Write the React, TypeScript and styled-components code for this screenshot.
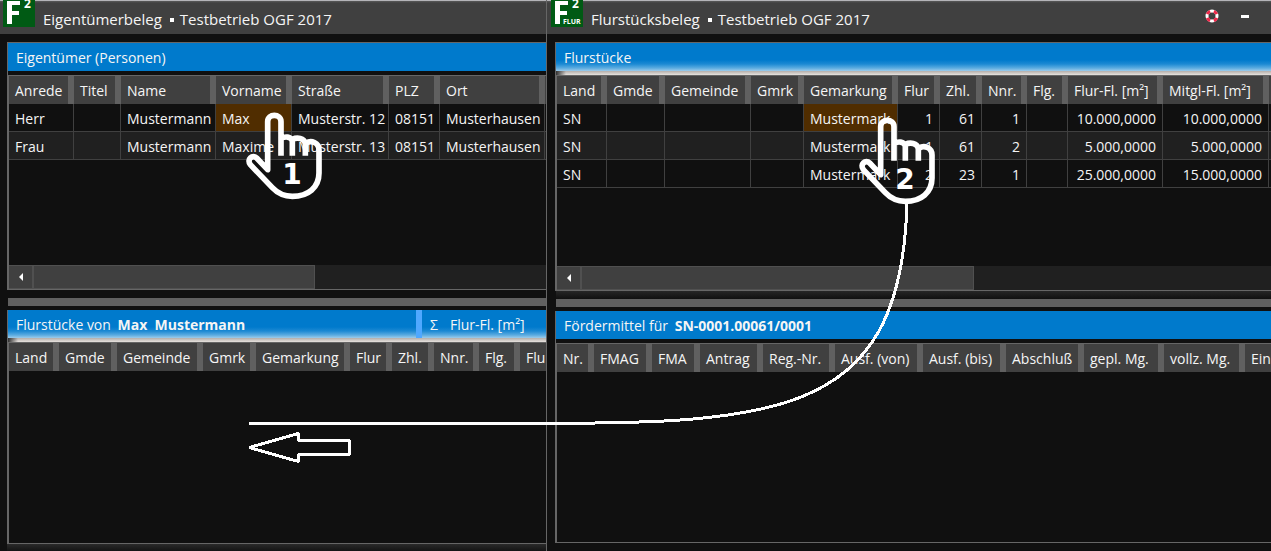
import React from "react";
import styled, { createGlobalStyle, css } from "styled-components";

const GlobalStyle = createGlobalStyle`
  * { box-sizing: border-box; }
  body {
    margin: 0;
    background: #101010;
    color: #f5f5f5;
    font-family: "Open Sans", "Noto Sans", sans-serif;
    font-size: 14px;
    line-height: 20px;
  }
`;

const Desktop = styled.main`
  position: relative;
  display: grid;
  grid-template-columns: minmax(0, 546fr) minmax(0, 725fr);
  min-height: 100vh;
  overflow: hidden;
`;

const Window = styled.section<{ $framed?: boolean }>`
  display: flex;
  flex-direction: column;
  min-width: 0;
  border-left: ${(p) => (p.$framed ? "1px solid #666" : "none")};
`;

const TitleBar = styled.header<{ $inset: number }>`
  display: flex;
  align-items: flex-start;
  height: 34px;
  padding-left: ${(p) => p.$inset}px;
  background: linear-gradient(#b4b4b8 1px, #5a5a5a 1px, #404040 3px);
`;

const Title = styled.h1`
  display: flex;
  gap: 6px;
  margin: 0 0 0 8px;
  font-size: 15px;
  font-weight: 400;
  line-height: 38px;
  white-space: nowrap;
`;

const Bullet = styled.span`
  width: 4px;
  height: 4px;
  margin: 18px 0 0 2px;
  background: #fff;
`;

const TitleActions = styled.div`
  display: flex;
  gap: 13px;
  margin: 6px 16px 0 auto;
`;

const TitleButton = styled.button`
  display: grid;
  place-items: center;
  width: 20px;
  height: 20px;
  padding: 0;
  border: 0;
  background: none;
`;

const Body = styled.div<{ $inset: number; $foot: number }>`
  display: flex;
  flex: 1;
  flex-direction: column;
  padding: 8px 0 0 ${(p) => p.$inset}px;
  &::after {
    content: "";
    height: ${(p) => p.$foot}px;
    background: ${(p) => (p.$foot === 7 ? "linear-gradient(#2a2a2a, #141414)" : "none")};
  }
`;

const Panel = styled.section<{ $grow?: boolean }>`
  display: flex;
  flex: ${(p) => (p.$grow ? 1 : "none")};
  flex-direction: column;
  border-left: 1px solid #666;
  border-top: ${(p) => (p.$grow ? "none" : "1px solid #666")};
`;

const PanelHead = styled.div<{ $glow?: boolean }>`
  display: flex;
  height: 32px;
  padding-bottom: 4px;
  line-height: 29px;
  white-space: nowrap;
  background: linear-gradient(#007acc 28px, #101010 28px);
  ${(p) =>
    p.$glow &&
    css`
      background:
        linear-gradient(90deg, #303030, transparent 10px) 0 28px / 100% 4px no-repeat,
        linear-gradient(#007acc 17px, #1c89d3 21px, #5aabe0 25px, #9dcbea 28px, #b4aeaa 28px, #e6e2de 32px);
    `}
`;

const PanelTitle = styled.h2`
  display: flex;
  flex: 1;
  margin: 0;
  padding-left: 8px;
  font-size: 14px;
  font-weight: 400;
  white-space: pre;
`;

const Subject = styled.b`
  margin-left: 3px;
`;

const Sum = styled.div`
  display: flex;
  gap: 12px;
  width: 130px;
  height: 28px;
  padding-left: 8px;
  border-left: 6px solid #4fa8ff;
`;

const Grid = styled.div<{ $height?: number }>`
  display: flex;
  flex: 1;
  flex-direction: column;
  min-height: ${(p) => p.$height ?? 0}px;
  overflow: hidden;
  border: 1px solid #666;
  border-right: 0;
`;

const Table = styled.table`
  table-layout: fixed;
  width: 0;
  border-collapse: separate;
  border-spacing: 0;
  white-space: nowrap;
`;

const Column = styled.col<{ $width: number }>`
  width: ${(p) => p.$width}px;
`;

const HeadCell = styled.th`
  height: 28px;
  padding: 2px 0 0 6px;
  border-right: 6px solid #606060;
  background: #404040;
  font-weight: 400;
  text-align: left;
`;

const Row = styled.tr`
  background: #101010;
  &:nth-child(even) {
    background: #202020;
  }
`;

const Cell = styled.td<{ $number?: boolean; $selected?: boolean }>`
  height: 28px;
  padding: ${(p) => (p.$number ? "2px 6px 0 0" : "2px 0 0 6px")};
  border-right: 1px solid #404040;
  border-bottom: 1px solid #404040;
  text-align: ${(p) => (p.$number ? "right" : "left")};
  background: ${(p) => (p.$selected ? "#502d00" : "transparent")};
`;

const ScrollBar = styled.div`
  display: flex;
  height: 24px;
  margin-top: auto;
  background: #202020;
`;

const ScrollButton = styled.button`
  display: grid;
  flex: none;
  place-items: center;
  width: 24px;
  padding: 0;
  border: 1px solid #505050;
  border-left: 0;
  background: #404040;
`;

const Track = styled.div`
  flex: 1;
`;

const Thumb = styled.div<{ $share: number }>`
  width: ${(p) => p.$share}%;
  height: 100%;
  border: 1px solid #505050;
  background: #404040;
`;

const Splitter = styled.div<{ $shaded?: boolean }>`
  height: 20px;
  margin-left: 1px;
  background: linear-gradient(
    ${(p) => (p.$shaded ? "#262626" : "#101010")} 0,
    #101010 8px,
    #606060 8px,
    #606060 16px,
    #101010 16px
  );
`;

const Annotations = styled.svg`
  position: absolute;
  top: 0;
  left: 0;
  pointer-events: none;
`;

const LogoSvg = styled.svg`
  flex: none;
`;

type ColumnDef = { label: string; width: number; number?: boolean };

const c = (label: string, width: number, number = false): ColumnDef => ({ label, width, number });

const ownerColumns = [
  c("Anrede", 65), c("Titel", 47), c("Name", 95), c("Vorname", 76),
  c("Straße", 97), c("PLZ", 51), c("Ort", 105), c("", 60),
];
const ownerRows = [
  ["Herr", "", "Mustermann", "Max", "Musterstr. 12", "08151", "Musterhausen", ""],
  ["Frau", "", "Mustermann", "Maxime", "Musterstr. 13", "08151", "Musterhausen", ""],
];
const parcelColumns = [
  c("Land", 50), c("Gmde", 58), c("Gemeinde", 86), c("Gmrk", 53), c("Gemarkung", 94),
  c("Flur", 42, true), c("Zhl.", 42, true), c("Nnr.", 45, true), c("Flg.", 41),
  c("Flur-Fl. [m²]", 95, true), c("Mitgl-Fl. [m²]", 106, true), c("", 60),
];
const parcelRows = [
  ["SN", "", "", "", "Mustermark", "1", "61", "1", "", "10.000,0000", "10.000,0000", ""],
  ["SN", "", "", "", "Mustermark", "1", "61", "2", "", "5.000,0000", "5.000,0000", ""],
  ["SN", "", "", "", "Mustermark", "2", "23", "1", "", "25.000,0000", "15.000,0000", ""],
];
const ownedColumns = [
  c("Land", 50), c("Gmde", 58), c("Gemeinde", 86), c("Gmrk", 53), c("Gemarkung", 94),
  c("Flur", 42), c("Zhl.", 42), c("Nnr.", 45), c("Flg.", 41), c("Flu", 95),
];
const fundingColumns = [
  c("Nr.", 37), c("FMAG", 58), c("FMA", 48), c("Antrag", 63), c("Reg.-Nr.", 72),
  c("Ausf. (von)", 88), c("Ausf. (bis)", 83), c("Abschluß", 78), c("gepl. Mg.", 80),
  c("vollz. Mg.", 81), c("Ein", 70),
];

function DataTable({ columns, rows = [], selected }: { columns: ColumnDef[]; rows?: string[][]; selected?: number }) {
  return (
    <Table>
      <colgroup>
        {columns.map((col, i) => <Column key={i} $width={col.width} />)}
      </colgroup>
      <thead>
        <tr>{columns.map((col, i) => <HeadCell key={i} scope="col">{col.label}</HeadCell>)}</tr>
      </thead>
      <tbody>
        {rows.map((row, r) => (
          <Row key={r}>
            {row.map((value, i) => (
              <Cell key={i} $number={columns[i].number} $selected={r === 0 && i === selected}>{value}</Cell>
            ))}
          </Row>
        ))}
      </tbody>
    </Table>
  );
}

function HorizontalScroll({ share }: { share: number }) {
  return (
    <ScrollBar>
      <ScrollButton aria-label="Nach links">
        <svg width="4" height="8" viewBox="0 0 4 8"><path d="M4 0v8L0 4z" fill="#fff" /></svg>
      </ScrollButton>
      <Track><Thumb $share={share} /></Track>
    </ScrollBar>
  );
}

function Logo({ caption }: { caption?: string }) {
  return (
    <LogoSvg width="32" height="27" viewBox="0 0 32 27" aria-hidden="true">
      <rect width="32" height="27" fill="#005a14" />
      <path d="M4 1h13v4H9v6h7v4H9v9H4z" fill="#fff" />
      <text x="21" y="8" fill="#fff" fontSize="12" fontWeight="700">2</text>
      {caption && <text x="12" y="24" fill="#fff" fontSize="7" fontWeight="700">{caption}</text>}
    </LogoSvg>
  );
}

function Hand({ x, y, label }: { x: number; y: number; label: string }) {
  return (
    <g transform={`translate(${x} ${y})`}>
      <path
        transform="scale(.3333)"
        d="M117 149V47C117 22 77 22 77 47V191L44 156C32 144 13 160 25 176L91 245C108 263 124 271 151 271C199 271 231 244 231 201V132C231 109 207 102 193 111M117 98C129 90 147 91 151 105V149M151 100C166 93 186 96 190 112V149"
        fill="none"
        stroke="#fff"
        strokeWidth="17"
        strokeLinejoin="round"
      />
      <text x="50" y="78" fill="#fff" textAnchor="middle" fontFamily="DejaVu Sans" fontSize="28" fontWeight="700">
        {label}
      </text>
    </g>
  );
}

export default function App() {
  return (
    <Desktop>
      <GlobalStyle />
      <Window>
        <TitleBar $inset={3}>
          <Logo />
          <Title>Eigentümerbeleg <Bullet />Testbetrieb OGF 2017</Title>
        </TitleBar>
        <Body $inset={7} $foot={7}>
          <Panel>
            <PanelHead><PanelTitle>Eigentümer (Personen)</PanelTitle></PanelHead>
            <Grid $height={215}>
              <DataTable columns={ownerColumns} rows={ownerRows} selected={3} />
              <HorizontalScroll share={55} />
            </Grid>
          </Panel>
          <Splitter />
          <Panel $grow>
            <PanelHead $glow>
              <PanelTitle>Flurstücke von <Subject>Max  Mustermann</Subject></PanelTitle>
              <Sum><span>Σ</span><span>Flur-Fl. [m²]</span></Sum>
            </PanelHead>
            <Grid><DataTable columns={ownedColumns} /></Grid>
          </Panel>
        </Body>
      </Window>
      <Window $framed>
        <TitleBar $inset={4}>
          <Logo caption="FLUR" />
          <Title>Flurstücksbeleg <Bullet />Testbetrieb OGF 2017</Title>
          <TitleActions>
            <TitleButton aria-label="Hilfe">
              <svg width="14" height="14" viewBox="0 0 14 14" fill="none" strokeWidth="3">
                <circle cx="7" cy="7" r="5" stroke="#fff" />
                <circle cx="7" cy="7" r="5" stroke="#f0284a" pathLength="80" strokeDasharray="10 10" strokeDashoffset="-5" />
              </svg>
            </TitleButton>
            <TitleButton aria-label="Minimieren">
              <svg width="8" height="3" viewBox="0 0 8 3"><rect width="8" height="3" fill="#fff" /></svg>
            </TitleButton>
          </TitleActions>
        </TitleBar>
        <Body $inset={8} $foot={8}>
          <Panel>
            <PanelHead $glow><PanelTitle>Flurstücke</PanelTitle></PanelHead>
            <Grid $height={216}>
              <DataTable columns={parcelColumns} rows={parcelRows} selected={4} />
              <HorizontalScroll share={57} />
            </Grid>
          </Panel>
          <Splitter $shaded />
          <Panel $grow>
            <PanelHead><PanelTitle>Fördermittel für <Subject>SN-0001.00061/0001</Subject></PanelTitle></PanelHead>
            <Grid><DataTable columns={fundingColumns} /></Grid>
          </Panel>
        </Body>
      </Window>
      <Annotations width="1000" height="500" viewBox="0 0 1000 500">
        <g fill="none" stroke="#fff" strokeWidth="3" shapeRendering="crispEdges">
          <path d="M249 423.500H450C760 423.500 900 435 907 204" />
          <path d="M249 447.500L298.500 433.500V440.500H349.500V454.500H298.500V461.500Z" strokeLinejoin="bevel" />
        </g>
        <Hand x={242} y={106} label="1" />
        <Hand x={855} y={111} label="2" />
      </Annotations>
    </Desktop>
  );
}
